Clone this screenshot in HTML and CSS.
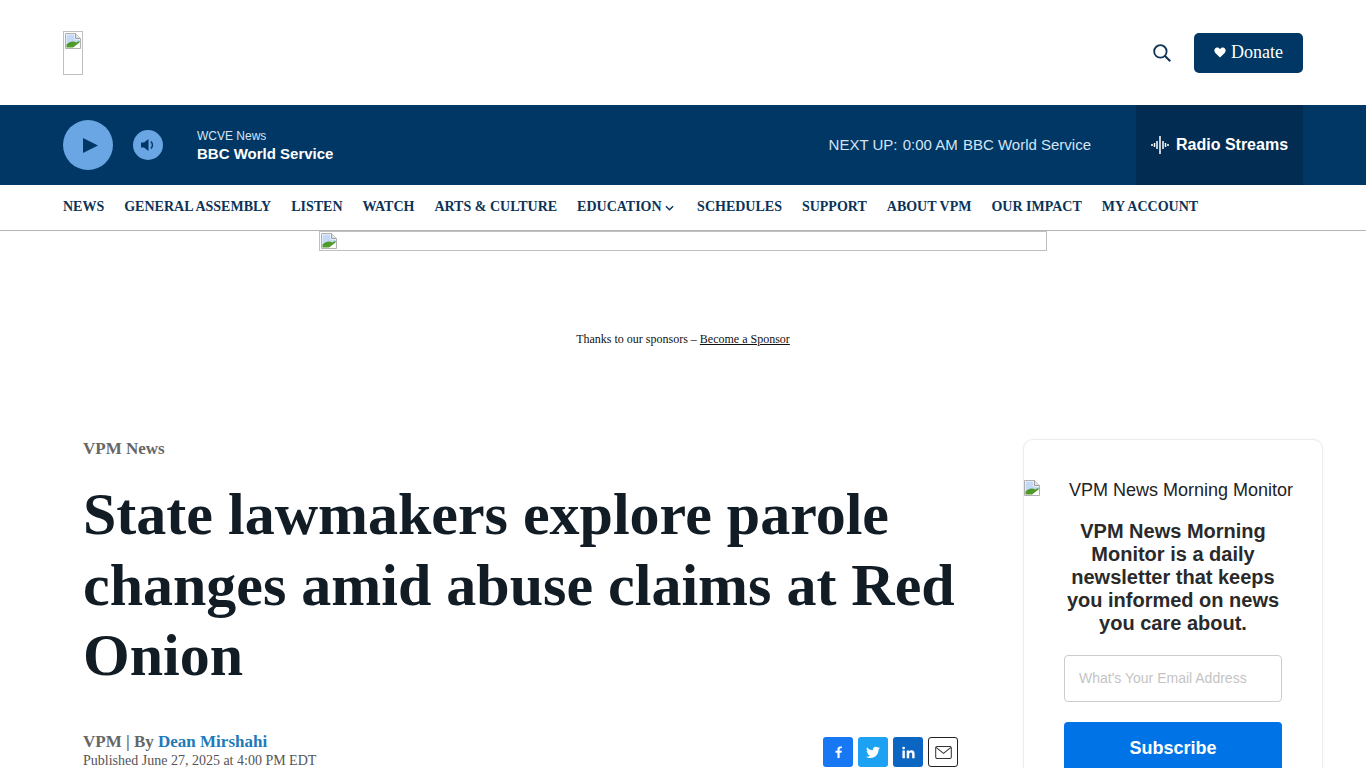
FILE: index.html
```html
<!DOCTYPE html>
<html lang="en">
<head>
    <meta charset="UTF-8">
    <meta name="viewport" content="width=device-width, initial-scale=1.0">
    <title>State lawmakers explore parole changes amid abuse claims at Red Onion</title>
    <link rel="stylesheet" href="styles.css">
</head>
<body>
    <svg class="defs" width="0" height="0">
        <symbol id="broken" viewBox="0 0 16 16">
            <path d="M.5.5H10.500L15.500 5.500V15.500H.5Z" fill="#fff" stroke="#b0b0b0"/>
            <path d="M10.500 .5V5.500H15.500" fill="#e4e4e4" stroke="#a0a0a0"/>
            <path d="M1.500 1.500H9.500V6.500H14.500V9L1.500 14.500Z" fill="#c3d9f5"/>
            <path d="M1.500 14.500V11.500C4.500 8.500 8 7.500 11.500 9.500L14.500 7.500V9.500L8 14.500Z" fill="#4f9a2a"/>
        </symbol>
    </svg>

    <header class="top">
        <a class="logo" href="#"><svg class="broken"><use href="#broken"/></svg></a>
        <div class="top-right">
            <svg class="search" viewBox="0 0 20 20"><circle cx="8.200" cy="8.200" r="6.900" fill="none" stroke="#0b3357" stroke-width="2"/><path d="M13 13L19.200 19.200" stroke="#0b3357" stroke-width="2.200"/></svg>
            <a class="donate" href="#">
                <svg class="heart" viewBox="0 0 14 13"><path d="M7 12.500L1.500 7C-.5 5 .2 1.800 2.500.9 4.300.2 6 1 7 2.600 8 1 9.700.2 11.500.9 13.800 1.800 14.500 5 12.500 7Z" fill="#fff"/></svg>
                Donate
            </a>
        </div>
    </header>

    <section class="player">
        <button class="play"><svg viewBox="0 0 16 16"><path d="M0 0L16 8L0 16Z" fill="#003764"/></svg></button>
        <button class="volume"><svg viewBox="0 0 16 16"><path d="M1 5.500H4L8.500 2V14L4 10.500H1Z" fill="#003764"/><path d="M11 4.500C12.800 6.500 12.800 9.500 11 11.500" fill="none" stroke="#003764" stroke-width="1.600"/></svg></button>
        <div class="now">
            <div class="now-station">WCVE News</div>
            <div class="now-show">BBC World Service</div>
        </div>
        <div class="next">NEXT UP: <span>0:00 AM</span> <span>BBC World Service</span></div>
        <a class="streams" href="#">
            <svg viewBox="0 0 18 18"><path d="M1 8V10M3.500 7V11M6 5V13M9 0V18M12 5V13M14.500 7V11M17 8V10" stroke="#fff" stroke-width="1.500" fill="none"/></svg>
            Radio Streams
        </a>
    </section>

    <nav class="nav">
        <a href="#">NEWS</a>
        <a href="#">GENERAL ASSEMBLY</a>
        <a href="#">LISTEN</a>
        <a href="#">WATCH</a>
        <a href="#">ARTS &amp; CULTURE</a>
        <a href="#">EDUCATION <svg class="caret" viewBox="0 0 10 6"><path d="M1 1L5 5L9 1" fill="none" stroke="#0b3357" stroke-width="1.600"/></svg></a>
        <a href="#">SCHEDULES</a>
        <a href="#">SUPPORT</a>
        <a href="#">ABOUT VPM</a>
        <a href="#">OUR IMPACT</a>
        <a href="#">MY ACCOUNT</a>
    </nav>

    <div class="ad"><svg class="broken"><use href="#broken"/></svg></div>
    <p class="sponsor">Thanks to our sponsors – <a href="#">Become a Sponsor</a></p>

    <main class="content">
        <article class="article">
            <div class="kicker">VPM News</div>
            <h1 class="headline">State lawmakers explore parole changes amid abuse claims at Red Onion</h1>
            <div class="meta">
                <div>
                    <div class="byline">VPM | By <a href="#">Dean Mirshahi</a></div>
                    <div class="date">Published June 27, 2025 at 4:00 PM EDT</div>
                </div>
                <div class="share">
                    <a class="fb" href="#"><svg viewBox="0 0 10 16"><path d="M6.500 16V9H9L9.400 6.200H6.500V4.500C6.500 3.700 6.800 3.100 7.900 3.100H9.500V.6C9.200.6 8.300.5 7.300.5 5.100.5 3.600 1.800 3.600 4.200V6.200H1V9H3.600V16Z" fill="#fff"/></svg></a>
                    <a class="tw" href="#"><svg viewBox="0 0 24 20"><path d="M24 2.400C23.100 2.800 22.200 3.100 21.200 3.200 22.200 2.600 23 1.600 23.400.400 22.400 1 21.400 1.400 20.300 1.600 19.400.6 18.100 0 16.700 0 13.500 0 11.200 3 11.900 6 7.800 5.800 4.100 3.800 1.700.8.400 3 1 5.900 3.200 7.400 2.400 7.400 1.600 7.100 1 6.800 .9 9.100 2.600 11.200 4.900 11.700 4.200 11.900 3.400 11.900 2.700 11.800 3.300 13.800 5.100 15.200 7.300 15.200 5.200 16.900 2.600 17.600 0 17.300 2.200 18.700 4.800 19.500 7.500 19.500 16.600 19.500 21.800 11.800 21.500 4.900 22.500 4.200 23.300 3.300 24 2.400Z" fill="#fff"/></svg></a>
                    <a class="li" href="#"><svg viewBox="0 0 16 16"><path d="M.5 5.500H3.500V15H.5ZM2 .8A1.700 1.700 0 1 1 2 4.200 1.700 1.700 0 0 1 2 .8ZM5.800 5.500H8.600V6.800C9.100 6 10.100 5.200 11.600 5.200 14.700 5.200 15.500 7.200 15.500 10V15H12.500V10.600C12.500 9.400 12.400 8 10.900 8 9.300 8 8.900 9.200 8.900 10.500V15H5.800Z" fill="#fff"/></svg></a>
                    <a class="mail" href="#"><svg viewBox="0 0 18 14"><rect x=".6" y=".6" width="16.800" height="12.800" rx="1.500" fill="none" stroke="#333" stroke-width="1.100"/><path d="M1 1.500L9 8L17 1.500" fill="none" stroke="#333" stroke-width="1.100"/></svg></a>
                </div>
            </div>
        </article>

        <aside class="signup">
            <div class="signup-img"><svg class="broken"><use href="#broken"/></svg><span>VPM News Morning Monitor</span></div>
            <h2 class="signup-title">VPM News Morning Monitor is a daily newsletter that keeps you informed on news you care about.</h2>
            <input class="signup-input" type="text" placeholder="What's Your Email Address">
            <button class="signup-btn">Subscribe</button>
        </aside>
    </main>
</body>
</html>
```

FILE: styles.css
```css
html, body {
    height: 768px;
    overflow: hidden;
}
body {
    margin: 0;
    background: #fff;
    font-family: "Liberation Serif", serif;
    color: #121c25;
}
a {
    color: inherit;
    text-decoration: none;
}
.defs {
    display: block;
    height: 0;
}
.broken {
    display: block;
    width: 16px;
    height: 16px;
}

/* top bar */
.top {
    display: flex;
    justify-content: space-between;
    align-items: center;
    height: 105px;
    padding: 0 63px;
}
.logo {
    box-sizing: border-box;
    width: 20px;
    height: 44px;
    padding: 1px;
    border: 1px solid #c0c0c0;
}
.top-right {
    display: flex;
    align-items: center;
    gap: 23px;
}
.search {
    width: 18px;
    height: 18px;
}
.donate {
    display: flex;
    align-items: center;
    justify-content: center;
    gap: 5px;
    width: 109px;
    height: 40px;
    background: #003764;
    border-radius: 5px;
    color: #fff;
    font-size: 18px;
}
.heart {
    width: 12px;
    height: 11px;
}

/* player */
.player {
    display: flex;
    align-items: center;
    height: 80px;
    padding: 0 63px;
    background: #003764;
    font-family: "Liberation Sans", sans-serif;
    color: #fff;
}
.player button {
    display: flex;
    align-items: center;
    justify-content: center;
    padding: 0;
    border: none;
    border-radius: 50%;
    background: #69a6e3;
}
.play {
    width: 50px;
    height: 50px;
}
.play svg {
    width: 15px;
    height: 15px;
    margin-left: 4px;
}
.volume {
    width: 30px;
    height: 30px;
    margin-left: 20px;
}
.volume svg {
    width: 16px;
    height: 16px;
}
.now {
    margin-left: 34px;
    padding-top: 2px;
}
.now-station {
    font-size: 12px;
    line-height: 16px;
    color: #d5e4f4;
}
.now-show {
    font-size: 15px;
    font-weight: bold;
    line-height: 20px;
}
.next {
    margin-left: auto;
    padding-bottom: 2px;
    font-size: 15px;
    color: #d5e4f4;
}
.next span {
    margin-left: 1px;
}
.streams {
    display: flex;
    align-items: center;
    gap: 7px;
    align-self: stretch;
    box-sizing: border-box;
    width: 167px;
    margin-left: 45px;
    padding-left: 15px;
    background: #022c52;
    font-size: 16px;
    font-weight: bold;
}
.streams svg {
    width: 18px;
    height: 18px;
}

/* main nav */
.nav {
    display: flex;
    align-items: center;
    gap: 20px;
    height: 43px;
    padding: 0 63px 2px;
    border-bottom: 1px solid #b4b4b4;
    font-size: 14px;
    font-weight: bold;
    color: #0b3357;
}
.caret {
    width: 9px;
    height: 6px;
    margin-right: 3px;
}

/* sponsor */
.ad {
    box-sizing: border-box;
    width: 728px;
    height: 20px;
    margin: 0 auto;
    padding: 1px;
    border: 1px solid #c0c0c0;
}
.sponsor {
    margin: 81px 0 0;
    font-size: 12px;
    line-height: 14px;
    text-align: center;
    color: #111;
}
.sponsor a {
    text-decoration: underline;
}

/* article */
.content {
    display: flex;
    justify-content: space-between;
    padding: 93px 43px 0 83px;
}
.article {
    width: 875px;
}
.kicker {
    margin-top: 1px;
    font-size: 17px;
    font-weight: bold;
    line-height: 17px;
    color: #666;
}
.headline {
    margin: 22px 0 0;
    font-size: 60px;
    line-height: 70.5px;
    color: #121c25;
}
.meta {
    display: flex;
    justify-content: space-between;
    margin-top: 41.5px;
}
.byline {
    font-size: 17px;
    font-weight: bold;
    line-height: 20px;
    color: #666;
}
.byline a {
    color: #1f7ab8;
}
.date {
    font-size: 14px;
    line-height: 18px;
    color: #555;
}
.share {
    display: flex;
    gap: 5px;
    margin-top: 5px;
}
.share a {
    display: flex;
    align-items: center;
    justify-content: center;
    box-sizing: border-box;
    width: 30px;
    height: 30px;
    border-radius: 3px;
}
.share svg {
    width: 13px;
    height: 13px;
}
.fb { background: #1877f2; }
.tw { background: #1da1f2; }
.li { background: #0a66c2; }
.share .fb svg {
    height: 12px;
}
.share .tw svg {
    width: 14px;
}
.mail {
    border: 1px solid #222;
}
.share .mail svg {
    width: 17px;
    height: 13px;
}

/* newsletter card */
.signup {
    box-sizing: border-box;
    width: 300px;
    height: 500px;
    padding-top: 40px;
    border: 1px solid #ececec;
    border-radius: 10px;
    box-shadow: 0 0 3px rgba(0, 0, 0, 0.05);
    font-family: "Liberation Sans", sans-serif;
    text-align: center;
}
.signup-img {
    display: flex;
    align-items: flex-start;
    font-size: 18px;
    line-height: 20px;
    color: #222;
}
.signup-img span {
    margin-left: 29px;
}
.signup-title {
    margin: 20px 40px 0;
    font-size: 20px;
    line-height: 23px;
    color: #2a2a2a;
}
.signup-input {
    display: block;
    box-sizing: border-box;
    width: 218px;
    height: 47px;
    margin: 20px auto 0;
    padding: 0 14px 2px;
    border: 1px solid #ccc;
    border-radius: 4px;
    font-family: inherit;
    font-size: 14px;
}
.signup-input::placeholder {
    color: #c4c4c4;
}
.signup-btn {
    display: block;
    width: 218px;
    height: 52px;
    margin: 20px auto 0;
    border: none;
    border-radius: 4px;
    background: #0073e6;
    color: #fff;
    font-family: inherit;
    font-size: 18px;
    font-weight: bold;
}
```
